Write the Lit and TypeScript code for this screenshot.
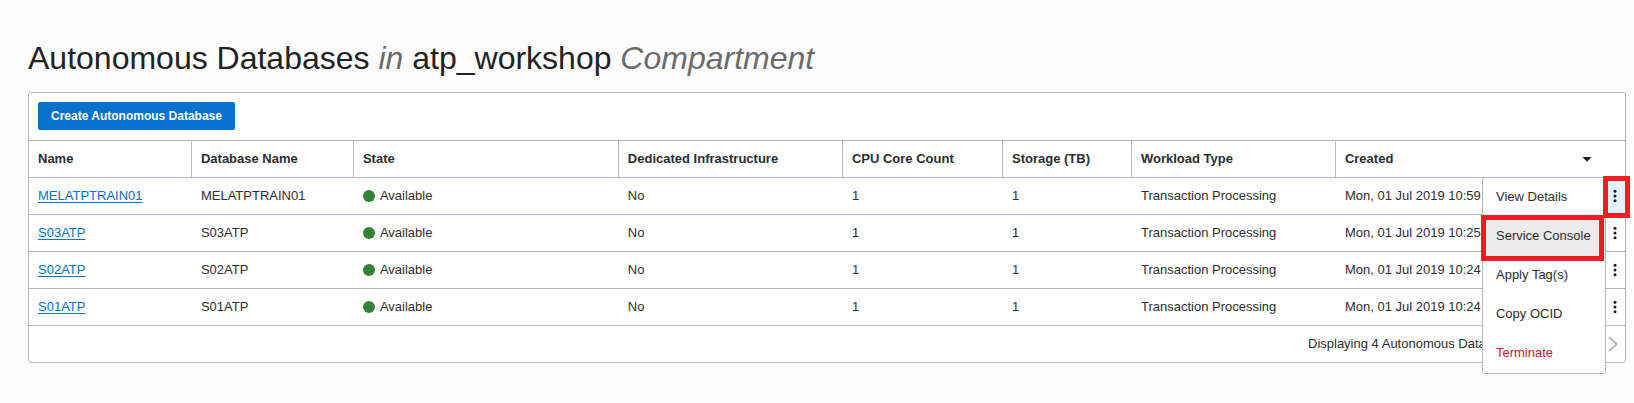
import { LitElement, html, css, nothing } from "lit";
import { customElement, property, state } from "lit/decorators.js";
import { classMap } from "lit/directives/class-map.js";

interface Database {
  name: string;
  state: string;
  dedicated: string;
  cores: number;
  storage: number;
  workload: string;
  created: string;
}

const row = (name: string, created: string): Database => ({
  name,
  state: "Available",
  dedicated: "No",
  cores: 1,
  storage: 1,
  workload: "Transaction Processing",
  created,
});

const DATABASES: Database[] = [
  row("MELATPTRAIN01", "Mon, 01 Jul 2019 10:59"),
  row("S03ATP", "Mon, 01 Jul 2019 10:25"),
  row("S02ATP", "Mon, 01 Jul 2019 10:24"),
  row("S01ATP", "Mon, 01 Jul 2019 10:24"),
];

@customElement("action-menu")
export class ActionMenu extends LitElement {
  static styles = css`
    :host {
      display: block;
      width: 122px;
      border: 1px solid #b0b7c1;
      border-radius: 3px;
      background: #fff;
    }
    .item {
      position: relative;
      display: block;
      width: 100%;
      height: 39px;
      padding: 0 13px 2px;
      border: 0;
      background: none;
      color: #2d2d2d;
      font: inherit;
      text-align: left;
      white-space: nowrap;
      cursor: pointer;
    }
    .active {
      background: #ebebeb;
    }
    .active::after {
      content: "";
      position: absolute;
      inset: -2px 1px -5px -2px;
      border: 5px solid #ef1c24;
    }
    .danger {
      color: #e4102f;
    }
  `;

  render() {
    const items = ["View Details", "Service Console", "Apply Tag(s)", "Copy OCID", "Terminate"];
    return items.map(
      (label) => html`<button
        type="button"
        role="menuitem"
        class=${classMap({
          item: true,
          active: label === "Service Console",
          danger: label === "Terminate",
        })}
      >${label}</button>`
    );
  }
}

@customElement("database-table")
export class DatabaseTable extends LitElement {
  @property({ attribute: false }) rows: Database[] = [];
  @state() private openRow = 0;

  static styles = css`
    :host {
      display: block;
    }
    .table {
      width: 100%;
      table-layout: fixed;
      border-collapse: separate;
      border-spacing: 0;
    }
    .c-name { width: 10.21%; }
    .c-db { width: 10.15%; }
    .c-state { width: 16.6%; }
    .c-dedicated { width: 14.04%; }
    .c-cores { width: 10.03%; }
    .c-storage { width: 8.08%; }
    .c-workload { width: 12.78%; }
    .c-action { width: 19px; }
    th,
    td {
      box-sizing: border-box;
      height: 37px;
      padding: 0 9px;
      border-bottom: 1px solid #b0b7c1;
      text-align: left;
      font-weight: normal;
      white-space: nowrap;
    }
    .head th {
      border-right: 1px solid #b0b7c1;
      font-weight: bold;
    }
    .head th:last-child {
      border-right: 0;
    }
    .sorted {
      display: flex;
      align-items: center;
      justify-content: space-between;
      padding-right: 24px;
    }
    .link {
      color: #0572ce;
      text-decoration: underline;
      text-underline-offset: 2px;
    }
    .status {
      display: flex;
      align-items: center;
      gap: 5px;
    }
    .dot {
      width: 12px;
      height: 12px;
      border-radius: 50%;
      background: #338337;
    }
    .action {
      position: relative;
      padding: 0;
    }
    .kebab {
      position: relative;
      display: flex;
      align-items: center;
      justify-content: center;
      width: 100%;
      height: 36px;
      padding: 0;
      border: 0;
      background: none;
      cursor: pointer;
    }
    .open {
      z-index: 3;
      background: #e4f2fc;
    }
    .open::after {
      content: "";
      position: absolute;
      inset: -2px -5px -4px -3px;
      border: 5px solid #ef1c24;
    }
    .menu {
      position: absolute;
      top: -1px;
      right: 100%;
      z-index: 2;
    }
  `;

  private toggle(index: number) {
    this.openRow = this.openRow === index ? -1 : index;
  }

  private renderRow(db: Database, index: number) {
    const open = index === this.openRow;
    return html`<tr>
      <th scope="row"><a class="link" href="#${db.name}">${db.name}</a></th>
      <td>${db.name}</td>
      <td><span class="status"><span class="dot"></span>${db.state}</span></td>
      <td>${db.dedicated}</td>
      <td>${db.cores}</td>
      <td>${db.storage}</td>
      <td>${db.workload}</td>
      <td>${db.created}</td>
      <td class="action">
        <button
          type="button"
          class=${classMap({ kebab: true, open })}
          aria-label="Actions"
          aria-expanded=${open}
          @click=${() => this.toggle(index)}
        >
          <svg width="4" height="14" viewBox="0 0 4 14" fill="#1d1d1d">
            <circle cx="2" cy="2.2" r="1.5" />
            <circle cx="2" cy="7" r="1.5" />
            <circle cx="2" cy="11.8" r="1.5" />
          </svg>
        </button>
        ${open ? html`<action-menu class="menu" role="menu"></action-menu>` : nothing}
      </td>
    </tr>`;
  }

  render() {
    return html`<table class="table">
      <colgroup>
        <col class="c-name" />
        <col class="c-db" />
        <col class="c-state" />
        <col class="c-dedicated" />
        <col class="c-cores" />
        <col class="c-storage" />
        <col class="c-workload" />
        <col />
        <col class="c-action" />
      </colgroup>
      <thead>
        <tr class="head">
          <th scope="col">Name</th>
          <th scope="col">Database Name</th>
          <th scope="col">State</th>
          <th scope="col">Dedicated Infrastructure</th>
          <th scope="col">CPU Core Count</th>
          <th scope="col">Storage (TB)</th>
          <th scope="col">Workload Type</th>
          <th scope="col" colspan="2" aria-sort="descending">
            <span class="sorted">Created
              <svg width="10" height="5" viewBox="0 0 10 5" fill="#1d1d1d">
                <path d="M0.5 0H9.5L5 4.8Z" />
              </svg>
            </span>
          </th>
        </tr>
      </thead>
      <tbody>
        ${this.rows.map((db, i) => this.renderRow(db, i))}
      </tbody>
    </table>`;
  }
}

@customElement("app-root")
export class AppRoot extends LitElement {
  static styles = css`
    :host {
      display: block;
      box-sizing: border-box;
      min-height: 100vh;
      padding: 36px 8px 40px 28px;
      background: #fcfcfc;
      color: #2d2d2d;
      font: 13px/18px "Liberation Sans", Arial, sans-serif;
    }
    .title {
      margin: 0 0 12px;
      color: #222;
      font-size: 32px;
      line-height: 44px;
      font-weight: normal;
    }
    .muted {
      color: #6b6b6b;
    }
    .panel {
      border: 1px solid #b0b7c1;
      border-radius: 3px;
      background: #fff;
    }
    .toolbar {
      display: flex;
      padding: 9px 9px 10px;
      border-bottom: 1px solid #b0b7c1;
    }
    .create {
      height: 28px;
      padding: 0 13px;
      border: 0;
      border-radius: 2px;
      background: #0572ce;
      color: #fff;
      font: inherit;
      font-size: 12px;
      font-weight: bold;
      cursor: pointer;
    }
    .footer {
      display: flex;
      align-items: center;
      justify-content: flex-end;
      height: 36px;
      padding-right: 7px;
    }
    .count {
      width: 300px;
    }
    .next {
      display: flex;
      padding: 0;
      border: 0;
      background: none;
      cursor: pointer;
    }
  `;

  render() {
    return html`
      <h1 class="title">
        Autonomous Databases <em class="muted">in</em> atp_workshop
        <em class="muted">Compartment</em>
      </h1>
      <section class="panel">
        <div class="toolbar">
          <button type="button" class="create">Create Autonomous Database</button>
        </div>
        <database-table .rows=${DATABASES}></database-table>
        <div class="footer">
          <span class="count">Displaying 4 Autonomous Databases</span>
          <button type="button" class="next" aria-label="Next page">
            <svg width="10" height="16" viewBox="0 0 10 16" fill="none" stroke="#a3a3a3" stroke-width="1.6">
              <path d="M1 1L8.6 8L1 15" />
            </svg>
          </button>
        </div>
      </section>
    `;
  }
}
